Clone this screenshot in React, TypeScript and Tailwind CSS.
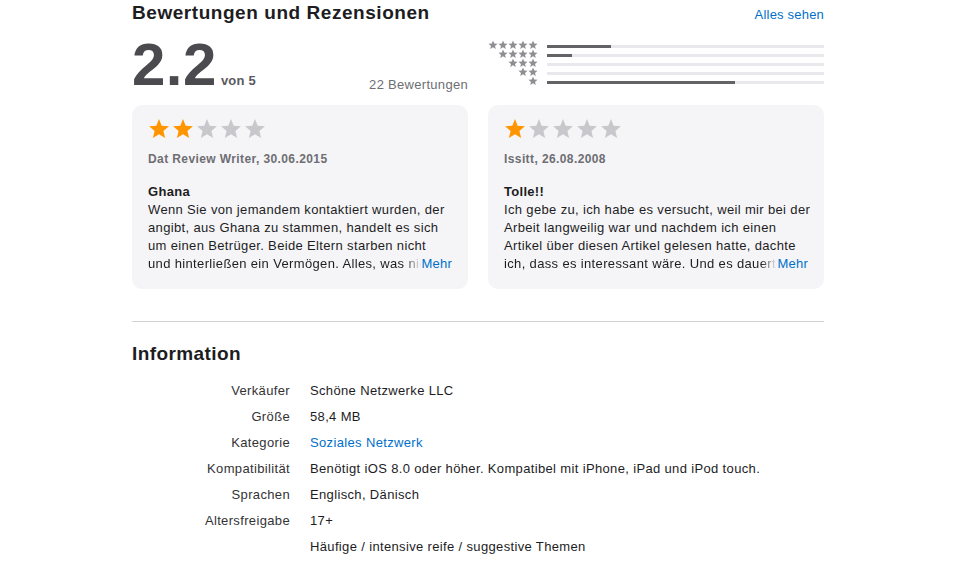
import React from "react";

const FONT = { fontFamily: '"Liberation Sans", Arial, sans-serif' };

function Star({ size, color }: { size: number; color: string }) {
  return (
    <svg width={size} height={size} viewBox="0 0 24 24" className="shrink-0">
      <polygon
        points="12,1.2 14.9,8.4 22.8,9 16.8,14.1 18.7,21.8 12,17.6 5.3,21.8 7.2,14.1 1.2,9 9.1,8.4"
        fill={color}
      />
    </svg>
  );
}

const histogram = [
  { stars: 5, pct: 23 },
  { stars: 4, pct: 9 },
  { stars: 3, pct: 0 },
  { stars: 2, pct: 0 },
  { stars: 1, pct: 68 },
];

type Review = {
  rating: number;
  author: string;
  title: string;
  lines: string[];
  last: string;
};

const reviews: Review[] = [
  {
    rating: 2,
    author: "Dat Review Writer, 30.06.2015",
    title: "Ghana",
    lines: [
      "Wenn Sie von jemandem kontaktiert wurden, der",
      "angibt, aus Ghana zu stammen, handelt es sich",
      "um einen Betrüger. Beide Eltern starben nicht",
    ],
    last: "und hinterließen ein Vermögen. Alles, was nicht",
  },
  {
    rating: 1,
    author: "Issitt, 26.08.2008",
    title: "Tolle!!",
    lines: [
      "Ich gebe zu, ich habe es versucht, weil mir bei der",
      "Arbeit langweilig war und nachdem ich einen",
      "Artikel über diesen Artikel gelesen hatte, dachte",
    ],
    last: "ich, dass es interessant wäre. Und es dauerte",
  },
];

function ReviewCard({ r }: { r: Review }) {
  return (
    <div className="bg-[#f5f5f7] rounded-[10px] px-4 pt-[13px] pb-[16px]">
      <div className="flex gap-[2px]">
        {[0, 1, 2, 3, 4].map((i) => (
          <Star key={i} size={22} color={i < r.rating ? "#ff9500" : "#c7c7cc"} />
        ))}
      </div>
      <div className="mt-[11px] text-[12px] leading-[16px] font-bold text-[#6e6e73] tracking-[0.4px]">
        {r.author}
      </div>
      <div className="mt-[16px] text-[13px] leading-[18px] font-bold text-[#1d1d1f] tracking-[0.3px]">
        {r.title}
      </div>
      <div className="text-[13px] leading-[18px] text-[#1d1d1f] tracking-[0.35px]">
        {r.lines.map((l, i) => (
          <div key={i} className="whitespace-nowrap">
            {l}
          </div>
        ))}
        <div className="flex whitespace-nowrap">
          <span className="flex-1 min-w-0 overflow-hidden [mask-image:linear-gradient(to_right,black_calc(100%-16px),transparent)]">
            {r.last}
          </span>
          <span className="text-[#0070c9] tracking-[0.2px] pl-[1px]">Mehr</span>
        </div>
      </div>
    </div>
  );
}

const info: [string, string, boolean?][] = [
  ["Verkäufer", "Schöne Netzwerke LLC"],
  ["Größe", "58,4 MB"],
  ["Kategorie", "Soziales Netzwerk", true],
  ["Kompatibilität", "Benötigt iOS 8.0 oder höher. Kompatibel mit iPhone, iPad und iPod touch."],
  ["Sprachen", "Englisch, Dänisch"],
  ["Altersfreigabe", "17+"],
  ["", "Häufige / intensive reife / suggestive Themen"],
];

export default function App() {
  return (
    <div className="w-[960px] h-[561px] bg-white overflow-hidden" style={FONT}>
      <div className="w-[692px] ml-[132px]">
        <div className="flex items-baseline justify-between pt-[1px]">
          <h2 className="text-[19px] leading-[24px] font-bold text-[#1d1d1f] tracking-[0.55px]">
            Bewertungen und Rezensionen
          </h2>
          <span className="text-[13px] text-[#0070c9] tracking-[0.2px]">Alles sehen</span>
        </div>

        <div className="grid grid-cols-2 gap-x-5 mt-[10px]">
          <div className="flex items-end justify-between">
            <div className="flex items-baseline">
              <span className="text-[60px] leading-[60px] font-bold text-[#4a4a4f] tracking-[0.5px]">
                2.2
              </span>
              <span className="ml-[4px] text-[13px] font-bold text-[#5a5a5f] tracking-[0.2px]">von 5</span>
            </div>
            <span className="text-[13px] text-[#6e6e73] tracking-[0.3px] mb-[1px]">22 Bewertungen</span>
          </div>
          <div className="flex flex-col pt-[5px]">
            {histogram.map((h) => (
              <div key={h.stars} className="flex items-center h-[9px]">
                <div className="w-[50px] flex justify-end">
                  {Array.from({ length: h.stars }).map((_, i) => (
                    <Star key={i} size={10} color="#8e8e93" />
                  ))}
                </div>
                <div className="ml-[9px] flex-1 h-[3px] bg-[#e8e8ed] mt-[3px]">
                  <div className="h-full bg-[#636366]" style={{ width: `${h.pct}%` }} />
                </div>
              </div>
            ))}
          </div>
        </div>

        <div className="grid grid-cols-2 gap-x-5 mt-[10px]">
          {reviews.map((r, i) => (
            <ReviewCard key={i} r={r} />
          ))}
        </div>

        <div className="mt-[32px] border-t border-[#d2d2d7]" />

        <h2 className="mt-[20px] text-[19px] leading-[24px] font-bold text-[#1d1d1f] tracking-[0.4px]">Information</h2>

        <div className="mt-[12px] flex flex-col text-[13px] leading-[26px] text-[#1d1d1f] tracking-[0.35px]">
          {info.map(([k, v, link], i) => (
            <div key={i} className="flex">
              <div className="w-[158px] text-right text-[#333336]">{k}</div>
              <div className={`ml-5 ${link ? "text-[#0070c9]" : ""}`}>{v}</div>
            </div>
          ))}
        </div>
      </div>
    </div>
  );
}
